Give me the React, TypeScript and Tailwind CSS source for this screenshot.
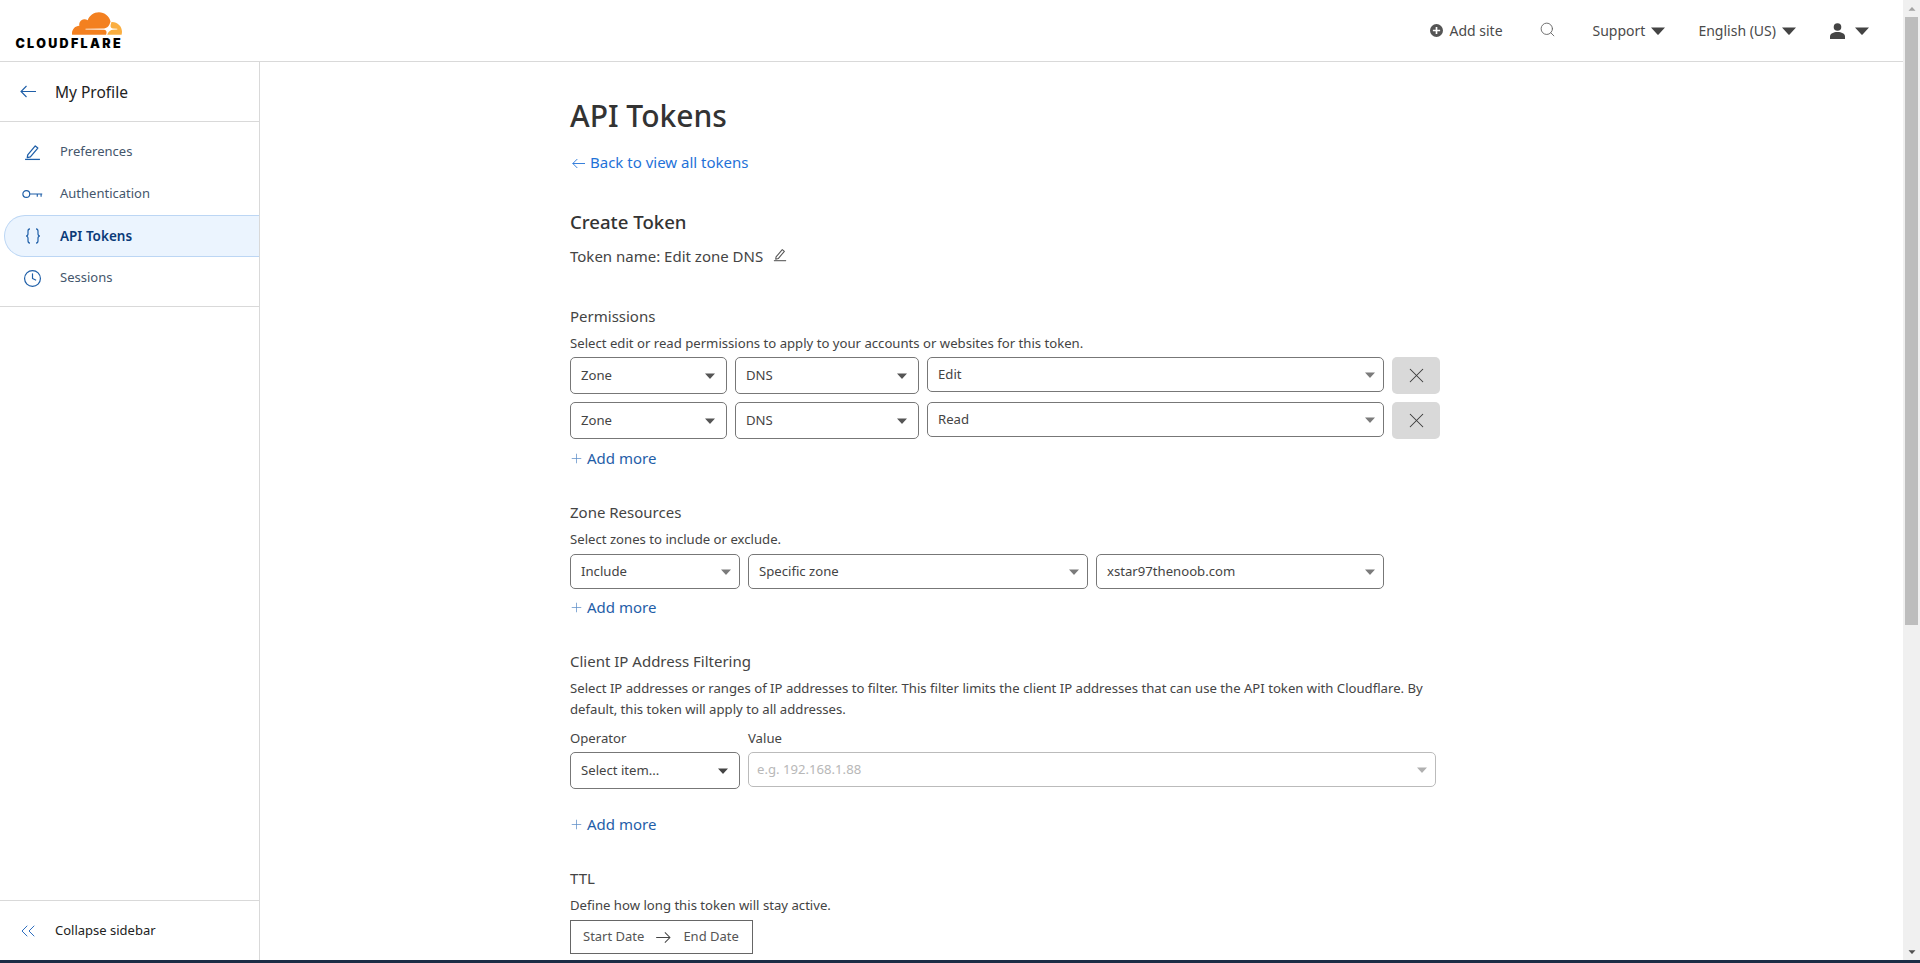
import React from "react";
import { Clock, ChevronsLeft, Search, Plus, X } from "lucide-react";

const Caret = ({ className }: { className: string }) => (
  <svg viewBox="0 0 14 8" className={className} fill="currentColor">
    <path d="M0 0.5h14L7.6 7.5a.8.8 0 0 1-1.2 0z" />
  </svg>
);

const Arrow = ({ className }: { className: string }) => (
  <svg viewBox="0 0 16 12" className={className} fill="none" stroke="currentColor" strokeWidth="1.1">
    <path d="M16 6H1M6.5.5 1 6l5.5 5.5" />
  </svg>
);

const Pen = ({ className }: { className: string }) => (
  <svg viewBox="0 0 16 16" className={className} fill="none" stroke="currentColor" strokeWidth="1.2">
    <path d="M3.5 10.2 10.6 1.8l2.4 2-7 8.3-2.9.7z" strokeLinejoin="round" />
    <path d="M1 14.5h14" />
  </svg>
);

const Key = ({ className }: { className: string }) => (
  <svg viewBox="0 0 22 10" className={className} fill="none" stroke="currentColor" strokeWidth="1.2">
    <circle cx="4.5" cy="5" r="3.6" />
    <path d="M8.2 5h13M16 5v3M20 5v3" />
  </svg>
);

const BracesIcon = ({ className }: { className: string }) => (
  <svg viewBox="0 0 16 16" className={className} fill="none" stroke="currentColor" strokeWidth="1.2">
    <path d="M5 .8C3.2.8 3 1.8 3 3.2v2.6C3 7 2.2 8 1 8c1.2 0 2 1 2 2.2v2.6c0 1.4.2 2.4 2 2.4" />
    <path d="M11 .8c1.8 0 2 1 2 2.4v2.6C13 7 13.8 8 15 8c-1.2 0-2 1-2 2.2v2.6c0 1.4-.2 2.4-2 2.4" />
  </svg>
);

const Logo = () => (
  <div className="flex flex-col items-end w-[107px]">
    <svg viewBox="0 6 24 12" className="w-[50px] h-[25px]">
      <path
        fill="#f38020"
        d="M16.5088 16.8447c.1475-.5068.0908-.9707-.1553-1.3154-.2246-.3164-.6045-.499-1.0615-.5205l-8.6592-.1123a.1559.1559 0 0 1-.1333-.0713c-.0283-.042-.0351-.0986-.021-.1553.0278-.084.1123-.1484.2036-.1562l8.7359-.1123c1.0351-.0489 2.1601-.8868 2.5537-1.9136l.499-1.3013c.0215-.0561.0293-.1128.0147-.168-.5625-2.5463-2.835-4.4453-5.5499-4.4453-2.5039 0-4.6284 1.6177-5.3876 3.8614-.4927-.3658-1.1187-.5625-1.794-.499-1.2026.119-2.1665 1.083-2.2861 2.2856-.0283.31-.0069.6128.0635.894C1.5683 13.171 0 14.7754 0 16.752c0 .1748.0142.3515.0352.5273.0141.083.0844.1475.1689.1475h15.9814c.0909 0 .1758-.0645.2032-.1553l.12-.4268z"
      />
      <path
        fill="#faae40"
        d="M19.2656 11.2813c-.0771 0-.1611 0-.2383.0112-.0566 0-.1054.0415-.127.0976l-.3378 1.1744c-.1475.5068-.0918.9707.1543 1.3164.2256.3164.6055.498 1.0625.5195l1.8437.1133c.0557 0 .1055.0263.1329.0703.0283.043.0351.1074.0214.1562-.0283.084-.1132.1485-.204.1553l-1.921.1123c-1.041.0488-2.1582.8867-2.5527 1.914l-.1406.3585c-.0283.0713.0215.1416.0986.1416h6.5977c.0771 0 .1474-.0489.169-.126.1122-.4082.1757-.837.1757-1.2803 0-2.6025-2.125-4.727-4.7344-4.7344"
      />
    </svg>
    <div className="mt-[1px] text-[12.5px] leading-[13px] font-black tracking-[2.35px] mr-[-1px] text-black font-['Inter',sans-serif] whitespace-nowrap">
      CLOUDFLARE
    </div>
  </div>
);

const Select = ({
  label,
  className,
  arrow = "text-[#7b7b7b]",
  pad = "pl-[10px] pr-[8px]",
}: {
  label: string;
  className: string;
  arrow?: string;
  pad?: string;
}) => (
  <div className={`flex items-center justify-between ${pad} bg-white border border-[#777] rounded-[5px] text-[13.15px] text-[#444] ${className}`}>
    <span className="whitespace-nowrap">{label}</span>
    <Caret className={`w-[10px] h-[6px] ${arrow}`} />
  </div>
);

const Remove = () => (
  <div className="w-[48px] h-[37px] ml-[8px] flex items-center justify-center bg-[#d9d9d9] rounded-[5px] text-[#3a3a3a]">
    <X size={25} strokeWidth={1} />
  </div>
);

const AddMore = ({ className }: { className: string }) => (
  <div className={`flex items-center text-[15px] leading-[20px] text-[#1f5ea8] ${className}`}>
    <Plus size={15} strokeWidth={1.2} className="text-[#5f8fc8] mr-[3px] ml-[-1px]" />
    Add more
  </div>
);

const NavItem = ({ icon, label, active }: { icon: React.ReactNode; label: string; active?: boolean }) => (
  <div
    className={`flex items-center h-[42px] ml-[4px] rounded-l-[21px] border-y border-l ${
      active ? "bg-[#ebf4fe] border-[#bcd6f4] text-[#0a3a78] font-semibold text-[13.5px]" : "border-transparent text-[#44566c] text-[13px]"
    }`}
  >
    <span className="w-[55px] flex justify-center text-[#1f5fa8]">{icon}</span>
    {label}
  </div>
);

const Heading = ({ children, className = "" }: { children: string; className?: string }) => (
  <div className={`text-[15px] leading-[20px] text-[#444] ${className}`}>{children}</div>
);

const Sub = ({ children, className = "" }: { children: string; className?: string }) => (
  <p className={`text-[13.15px] leading-[21px] text-[#444] ${className}`}>{children}</p>
);

export default function App() {
  return (
    <div className="flex flex-col w-[1920px] h-[963px] overflow-hidden bg-white font-['Noto_Sans','Open_Sans',sans-serif] text-[#36393a]">
      <div className="flex flex-1 min-h-0">
        <div className="flex flex-col flex-1 min-w-0">
          <header className="flex items-center justify-between h-[62px] border-b border-[#d9d9d9] pl-[15px] pr-[34px] shrink-0">
            <Logo />
            <div className="flex items-center text-[14px] text-[#4a4a4a]">
              <svg viewBox="0 0 14 14" className="w-[13px] h-[13px] mr-[6px] text-[#555]" fill="currentColor">
                <path d="M7 0a7 7 0 1 0 0 14A7 7 0 0 0 7 0zm.9 6.1h3v1.8h-3v3H6.1v-3h-3V6.1h3v-3h1.8z" />
              </svg>
              <span>Add site</span>
              <Search size={17} strokeWidth={1.3} className="ml-[36px] mb-[2px] text-[#666]" />
              <span className="ml-[37px]">Support</span>
              <Caret className="w-[14px] h-[8px] ml-[6px] text-[#444]" />
              <span className="ml-[33px]">English (US)</span>
              <Caret className="w-[14px] h-[8px] ml-[6px] text-[#444]" />
              <svg viewBox="0 0 15 16" className="w-[15px] h-[16px] ml-[34px] text-[#444]" fill="currentColor">
                <circle cx="7.5" cy="4" r="3.8" />
                <path d="M0 16v-2.5C0 10.5 3.5 9 7.5 9s7.5 1.5 7.5 4.5V16z" />
              </svg>
              <Caret className="w-[14px] h-[8px] ml-[10px] text-[#444]" />
            </div>
          </header>

          <div className="flex flex-1 min-h-0">
            <aside className="flex flex-col w-[260px] shrink-0 border-r border-[#d9d9d9]">
              <div className="flex items-center h-[60px] pl-[20px] border-b border-[#d9d9d9] text-[15.5px] text-[#222] shrink-0">
                <Arrow className="w-[16px] h-[13px] text-[#1f5fa8]" />
                <span className="ml-[19px] mt-[2px]">My Profile</span>
              </div>
              <nav className="pt-[9px] pb-[7px] border-b border-[#d9d9d9] flex flex-col">
                <NavItem icon={<Pen className="w-[17px] h-[17px]" />} label="Preferences" />
                <NavItem icon={<Key className="w-[21px] h-[10px]" />} label="Authentication" />
                <NavItem icon={<BracesIcon className="w-[16px] h-[16px]" />} label="API Tokens" active />
                <NavItem icon={<Clock size={19} strokeWidth={1.5} />} label="Sessions" />
              </nav>
              <div className="mt-auto flex items-center h-[60px] pl-[16px] border-t border-[#d9d9d9] text-[13px] text-[#222] shrink-0">
                <ChevronsLeft size={24} strokeWidth={1} className="text-[#2f6fc0]" />
                <span className="ml-[15px]">Collapse sidebar</span>
              </div>
            </aside>

            <main className="flex-1 min-w-0 pl-[310px] pt-[34px]">
              <h1 className="text-[30px] leading-[40px] text-[#333] font-medium">API Tokens</h1>
              <div className="flex items-center mt-[16px] text-[15px] leading-[20px] text-[#1f72d8]">
                <Arrow className="w-[13px] h-[11px] mr-[5px] mt-[2px] ml-[2px]" />
                Back to view all tokens
              </div>
              <h2 className="mt-[37px] text-[18.6px] leading-[26px] text-[#333] font-medium">Create Token</h2>
              <div className="flex items-center mt-[11px] text-[15px] leading-[20px] text-[#444]">
                Token name: Edit zone DNS
                <Pen className="w-[14px] h-[14px] ml-[10px] mb-[3px] text-[#555]" />
              </div>

              <Heading className="mt-[40px]">Permissions</Heading>
              <Sub className="mt-[7px]">Select edit or read permissions to apply to your accounts or websites for this token.</Sub>
              <div className="flex flex-col gap-[8px] mt-[3px]">
                <div className="flex items-start gap-[8px]">
                  <Select label="Zone" className="w-[157px] h-[37px]" arrow="text-[#555]" pad="pl-[10px] pr-[11px]" />
                  <Select label="DNS" className="w-[184px] h-[37px]" arrow="text-[#555]" pad="pl-[10px] pr-[11px]" />
                  <div className="flex items-start">
                    <Select label="Edit" className="w-[457px] h-[35px]" />
                    <Remove />
                  </div>
                </div>
                <div className="flex items-start gap-[8px]">
                  <Select label="Zone" className="w-[157px] h-[37px]" arrow="text-[#555]" pad="pl-[10px] pr-[11px]" />
                  <Select label="DNS" className="w-[184px] h-[37px]" arrow="text-[#555]" pad="pl-[10px] pr-[11px]" />
                  <div className="flex items-start">
                    <Select label="Read" className="w-[457px] h-[35px]" />
                    <Remove />
                  </div>
                </div>
              </div>
              <AddMore className="mt-[9px]" />

              <Heading className="mt-[34px]">Zone Resources</Heading>
              <Sub className="mt-[7px]">Select zones to include or exclude.</Sub>
              <div className="flex gap-[8px] mt-[4px]">
                <Select label="Include" className="w-[170px] h-[35px]" />
                <Select label="Specific zone" className="w-[340px] h-[35px]" />
                <Select label="xstar97thenoob.com" className="w-[288px] h-[35px]" />
              </div>
              <AddMore className="mt-[8px]" />

              <Heading className="mt-[34px]">Client IP Address Filtering</Heading>
              <Sub className="mt-[7px] w-[870px]">
                Select IP addresses or ranges of IP addresses to filter. This filter limits the client IP addresses that can use the API token with Cloudflare. By default, this token will apply to all addresses.
              </Sub>
              <div className="flex gap-[8px] mt-[9px]">
                <div className="flex flex-col">
                  <span className="text-[13.15px] leading-[18px] text-[#444]">Operator</span>
                  <Select label="Select item..." className="w-[170px] h-[37px] mt-[5px]" arrow="text-[#444]" pad="pl-[10px] pr-[11px]" />
                </div>
                <div className="flex flex-col">
                  <span className="text-[13.15px] leading-[18px] text-[#444]">Value</span>
                  <Select label="e.g. 192.168.1.88" className="w-[688px] h-[35px] mt-[5px] border-[#bbb] !text-[#b8b8b8]" arrow="text-[#b0b0b0]" pad="pl-[8px] pr-[8px]" />
                </div>
              </div>
              <AddMore className="mt-[25px]" />

              <Heading className="mt-[34px]">TTL</Heading>
              <Sub className="mt-[7px]">Define how long this token will stay active.</Sub>
              <div className="flex items-center w-[183px] h-[34px] mt-[4px] border border-[#666] pl-[12px] text-[13px] text-[#555]">
                Start Date
                <Arrow className="w-[15px] h-[11px] rotate-180 mx-[12px] text-[#444]" />
                End Date
              </div>
            </main>
          </div>
        </div>

        <div className="flex flex-col items-center w-[17px] shrink-0 bg-[#f0f0f0]">
          <div className="h-[17px] flex items-center justify-center shrink-0">
            <Caret className="w-[8px] h-[4px] rotate-180 text-[#a3a3a3]" />
          </div>
          <div className="w-full h-[608px] bg-[#bdbdbd] shrink-0 border-x-2 border-[#f0f0f0]" />
          <div className="mt-auto h-[17px] flex items-center justify-center shrink-0">
            <Caret className="w-[8px] h-[4px] text-[#505050]" />
          </div>
        </div>
      </div>
      <div className="h-[3px] shrink-0 bg-[#1b2c45]" />
    </div>
  );
}
